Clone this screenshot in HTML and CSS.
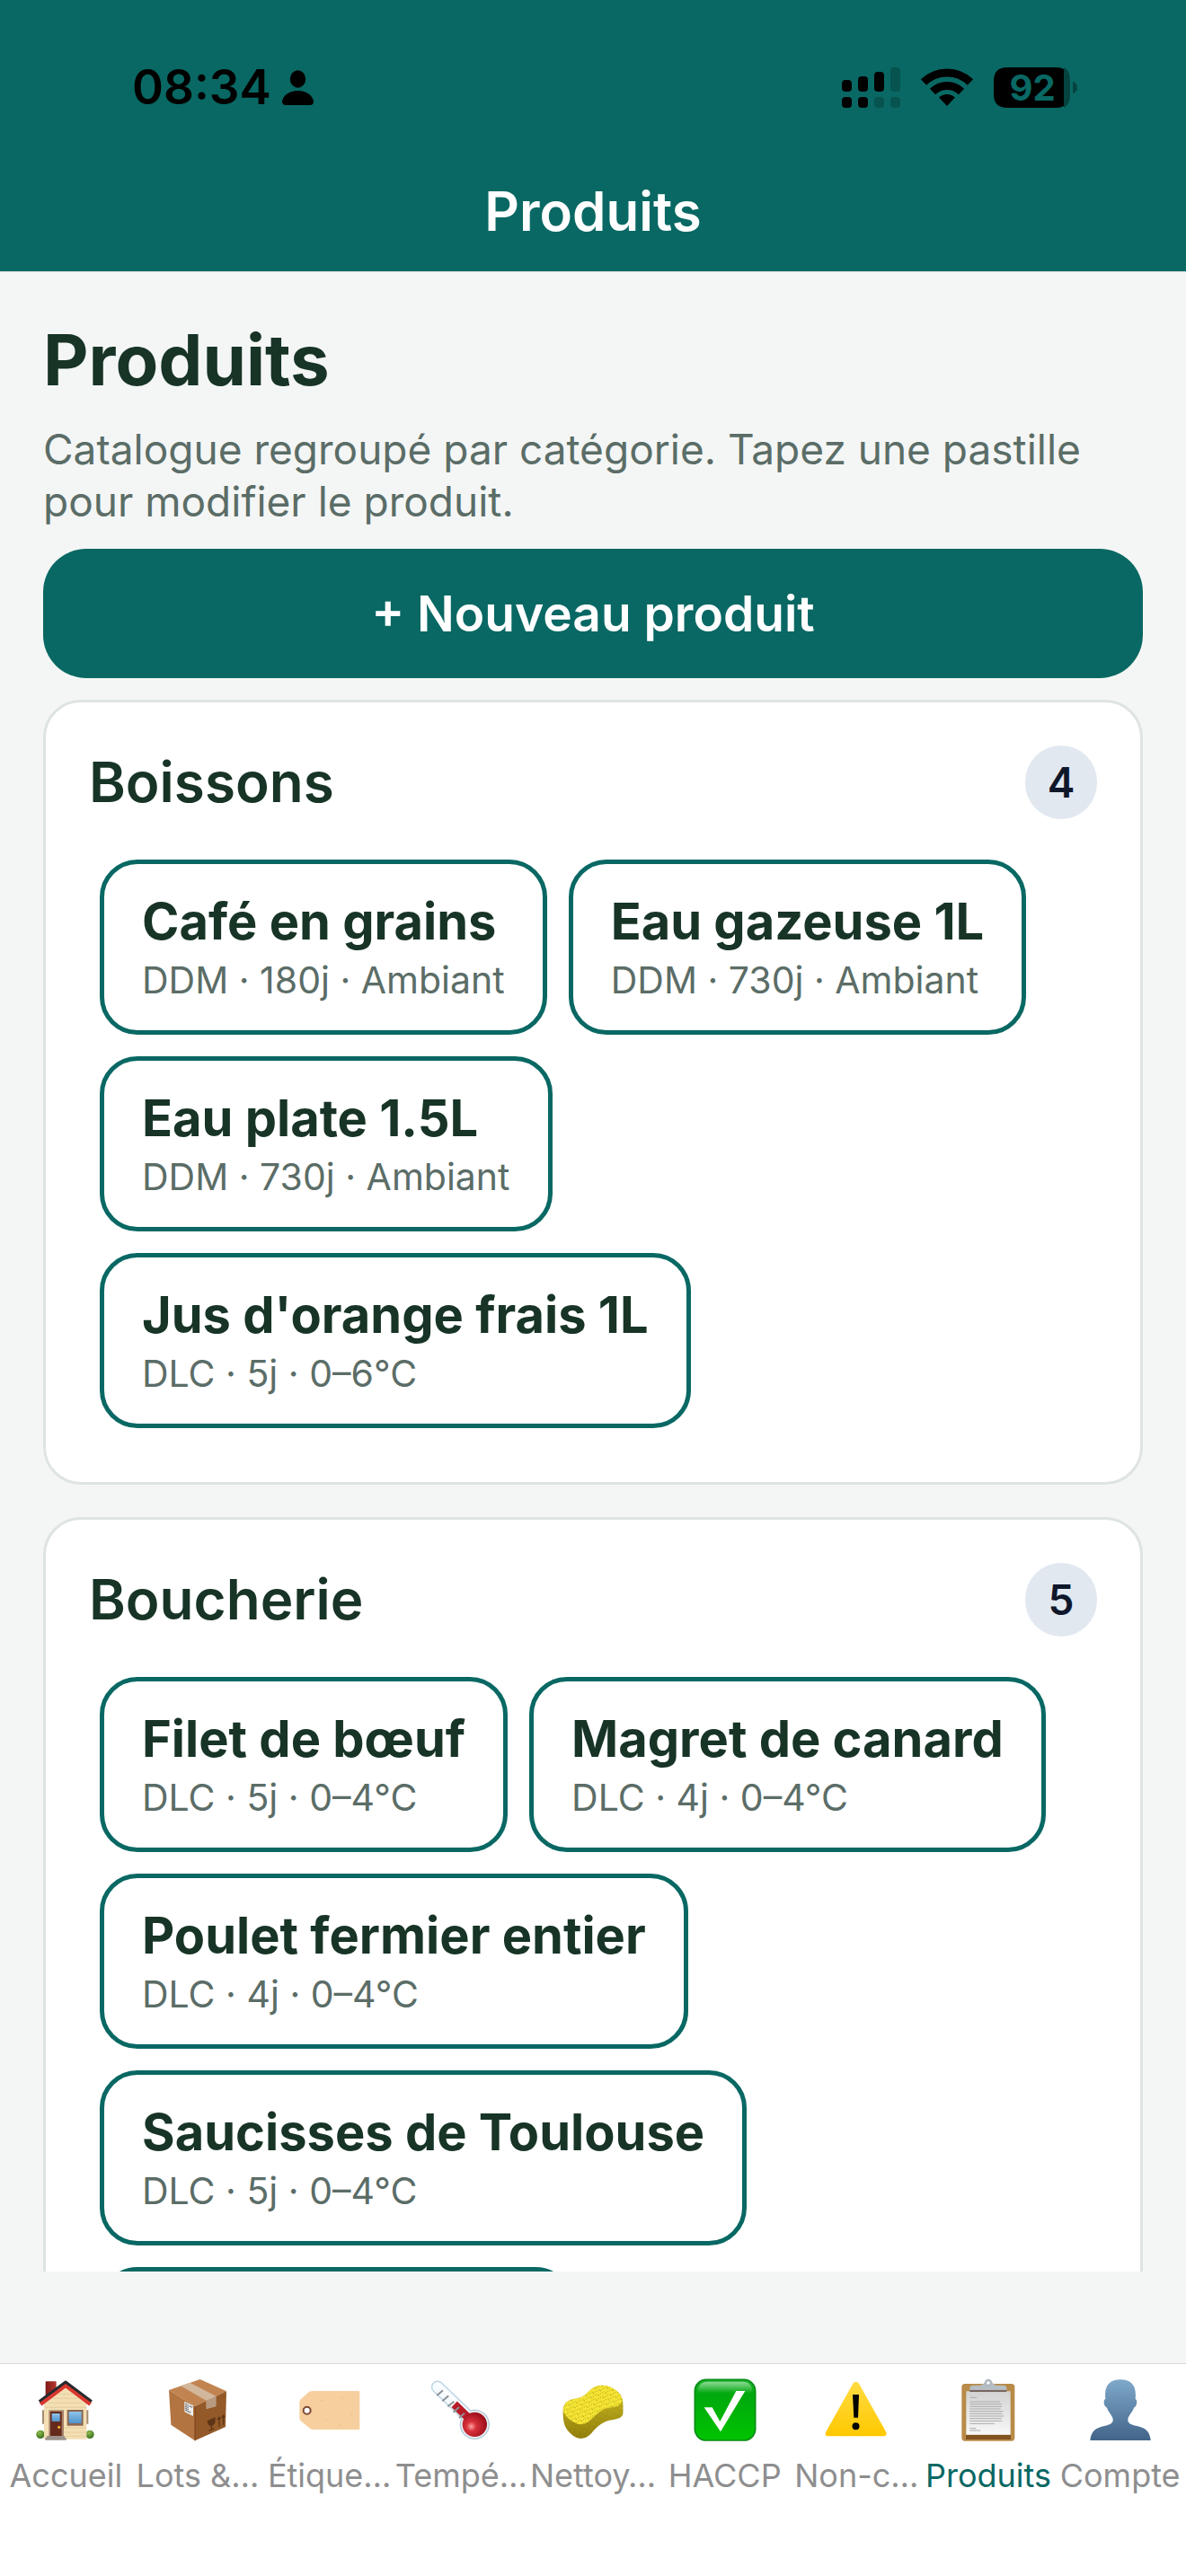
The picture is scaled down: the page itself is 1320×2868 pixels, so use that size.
FILE: index.html
```html
<!DOCTYPE html>
<html lang="fr">
<head>
    <meta charset="UTF-8">
    <meta name="viewport" content="width=device-width, initial-scale=1.0">
    <title>Produits</title>
    <link rel="stylesheet" href="styles.css">
</head>
<body>
    <!-- Header -->
    <header class="app-header">
        <div class="status-bar">
            <div class="status-left">
                <span class="time">08:34</span>
                <svg class="person" viewBox="0 0 35 39" aria-hidden="true">
                    <ellipse cx="17.5" cy="10" rx="8.7" ry="9.7"/>
                    <path d="M4 39C1 39 0 37 0 35C1 28 8 23 17.500 23S34 28 35 35C35 37 34 39 31 39Z"/>
                </svg>
            </div>
            <div class="status-right">
                <svg class="signal" viewBox="0 0 65 45" aria-hidden="true">
                    <rect x="0" y="14" width="11" height="13" rx="4"/>
                    <rect x="18" y="10" width="11" height="17" rx="4"/>
                    <rect x="36" y="5" width="11" height="22" rx="4"/>
                    <rect x="54" y="0" width="11" height="27" rx="4" opacity=".2"/>
                    <rect x="0" y="33" width="11" height="12" rx="4"/>
                    <rect x="18" y="33" width="11" height="12" rx="4"/>
                    <rect x="36" y="33" width="11" height="12" rx="4" opacity=".2"/>
                    <rect x="54" y="33" width="11" height="12" rx="4" opacity=".2"/>
                </svg>
                <svg class="wifi" viewBox="0 0 60 44" aria-hidden="true">
                    <path d="M4 16.500A37.500 37.500 0 0 1 56 16.500M14 27A23 23 0 0 1 46 27" fill="none" stroke="#000" stroke-width="9"/>
                    <path d="M30 43L21 33.500A13 13 0 0 1 39 33.500Z"/>
                </svg>
                <svg class="battery" viewBox="0 0 94 45" aria-hidden="true">
                    <path d="M78 0C83 2 85 8 85 15V30C85 37 83 43 78 45ZM88 16C92 17 93 20 93 22.500S92 28 88 29Z" opacity=".35"/>
                    <path d="M15 0H70Q75 0 78 2V43Q75 45 70 45H15Q0 45 0 30V15Q0 0 15 0Z"/>
                    <text x="43" y="37" text-anchor="middle">92</text>
                </svg>
            </div>
        </div>
        <div class="nav-title">Produits</div>
    </header>

    <!-- Main Content -->
    <main>
        <h1>Produits</h1>
        <p class="intro">Catalogue regroupé par catégorie. Tapez une pastille pour modifier le produit.</p>
        <button type="button" class="new-button">+ Nouveau produit</button>

        <section class="card">
            <div class="card-header">
                <h2>Boissons</h2>
                <span class="count">4</span>
            </div>
            <div class="chips">
                <button type="button" class="chip"><strong>Café en grains</strong><small>DDM · 180j · Ambiant</small></button>
                <button type="button" class="chip"><strong>Eau gazeuse 1L</strong><small>DDM · 730j · Ambiant</small></button>
                <button type="button" class="chip"><strong>Eau plate 1.5L</strong><small>DDM · 730j · Ambiant</small></button>
                <button type="button" class="chip"><strong>Jus d'orange frais 1L</strong><small>DLC · 5j · 0–6°C</small></button>
            </div>
        </section>

        <section class="card">
            <div class="card-header">
                <h2>Boucherie</h2>
                <span class="count">5</span>
            </div>
            <div class="chips">
                <button type="button" class="chip"><strong>Filet de bœuf</strong><small>DLC · 5j · 0–4°C</small></button>
                <button type="button" class="chip"><strong>Magret de canard</strong><small>DLC · 4j · 0–4°C</small></button>
                <button type="button" class="chip"><strong>Poulet fermier entier</strong><small>DLC · 4j · 0–4°C</small></button>
                <button type="button" class="chip"><strong>Saucisses de Toulouse</strong><small>DLC · 5j · 0–4°C</small></button>
                <button type="button" class="chip chip-empty" aria-label="Produit"></button>
            </div>
        </section>
    </main>

    <!-- Tab bar -->
    <nav class="tab-bar">
        <a href="#accueil" class="tab">
            <svg viewBox="0 0 210 210" aria-hidden="true">
                <defs>
                    <linearGradient id="glass" x1="0" y1="0" x2="0" y2="1"><stop offset="0" stop-color="#8ec4ea"/><stop offset="1" stop-color="#4f93cc"/></linearGradient>
                    <linearGradient id="brick"><stop offset="0" stop-color="#7d1a17"/><stop offset="1" stop-color="#b5342c"/></linearGradient>
                    <radialGradient id="bush" cx=".4" cy=".3" r=".8"><stop offset="0" stop-color="#8fbe50"/><stop offset="1" stop-color="#2f6417"/></radialGradient>
                </defs>
                <path d="M27 106h8v46h-8zM174 106h7v46h-7z" fill="#a58b71"/>
                <circle cx="21" cy="187" r="14" fill="url(#bush)"/>
                <circle cx="186" cy="187" r="14" fill="url(#bush)"/>
                <rect x="38" y="10" width="36" height="60" rx="2" fill="url(#brick)"/>
                <path d="M33 84L105 24L175 84V203H33Z" fill="#f3dfb3"/>
                <path d="M82 52H128M65 67H145M48 82H162M35 97H174M98 165H174M98 180H174M98 193H174" stroke="#dcc497" stroke-width="2"/>
                <path d="M21 86L105 23L188 86" fill="none" stroke="#d8372f" stroke-width="14"/>
                <path d="M17 77L105 12L192 77" fill="none" stroke="#252a2e" stroke-width="9" stroke-linejoin="round"/>
                <rect x="49" y="106" width="50" height="88" fill="#a8826a"/>
                <rect x="54" y="111" width="38" height="82" fill="#652a1b"/>
                <rect x="59" y="117" width="27" height="27" fill="url(#glass)"/>
                <circle cx="83" cy="163" r="5" fill="#f2ad2e"/>
                <path d="M42 192H102V198H107V206H37V198H42Z" fill="#9b928a"/>
                <rect x="110" y="105" width="54" height="53" fill="#8b6750"/>
                <rect x="116" y="111" width="42" height="39" fill="url(#glass)"/>
            </svg>
            <span>Accueil</span>
        </a>
        <a href="#lots" class="tab">
            <svg viewBox="0 0 210 210" aria-hidden="true">
                <path d="M9 39L113 3L201 43L96 93Z" fill="#c18450"/>
                <path d="M9 39L96 93V208L16 155Z" fill="#b27440"/>
                <path d="M96 93L201 43L198 162L96 208Z" fill="#935928"/>
                <path d="M96 93V208" stroke="#774116" stroke-width="3"/>
                <path d="M48 25L79 14L166 59V93L134 102V74Z" fill="#d2b79c"/>
                <path d="M134 74L166 59V93L134 102Z" fill="#b79a80"/>
                <path d="M61 77L90 91V126L61 112Z" fill="#eee"/>
                <path d="M64 85L74 90M64 92L74 97M64 99L74 104M78 92L87 97M64 106L83 115" stroke="#777" stroke-width="5" stroke-dasharray="5 2"/>
                <path d="M139 143L162 133C163 149 157 156 151 157C144 157 140 150 139 143ZM151 155V171M142 175L160 167M177 161V132M191 155V126M171 138L177 130L181 135M185 132L191 123L196 129" fill="#5d3516" stroke="#5d3516" stroke-width="4"/>
            </svg>
            <span>Lots &amp;…</span>
        </a>
        <a href="#etiquettes" class="tab">
            <svg viewBox="0 0 210 210" aria-hidden="true">
                <path d="M46 42H201Q205 42 205 46V167Q205 171 201 171H51Q43 171 36 165L8 142Q4 139 4 133V79Q4 74 8 70L33 47Q39 42 46 42Z" fill="#f7cf9f"/>
                <path d="M75 72l6 3M112 97l4 4M144 66l5-2M138 155l6 3M90 140l4-3M175 120l5 2" stroke="#e5b982" stroke-width="3"/>
                <circle cx="29" cy="107" r="12" fill="#fff" stroke="#7b4a32" stroke-width="6"/>
            </svg>
            <span>Étique…</span>
        </a>
        <a href="#temperatures" class="tab">
            <svg viewBox="0 0 210 210" aria-hidden="true">
                <defs>
                    <radialGradient id="bulb" cx=".36" cy=".58" r=".65"><stop offset="0" stop-color="#ffa4a4"/><stop offset=".3" stop-color="#d8323b"/><stop offset="1" stop-color="#960a16"/></radialGradient>
                </defs>
                <path d="M27 29L145 142" stroke="#bdd5e2" stroke-width="43" stroke-linecap="round"/>
                <circle cx="151" cy="154" r="50" fill="#b4c8d4"/>
                <path d="M27 29L145 142" stroke="#f5fbff" stroke-width="34" stroke-linecap="round"/>
                <circle cx="151" cy="154" r="46" fill="#e6eef2"/>
                <path d="M83 86L137 139" stroke="#b91b27" stroke-width="27"/>
                <circle cx="151" cy="154" r="41" fill="url(#bulb)"/>
                <path d="M25 57L45 40M43 76L64 58M61 94L82 77M80 113L99 96M99 132L117 116" stroke="#8c9094" stroke-width="6"/>
                <path d="M26 18L87 76" stroke="#fff" stroke-width="5" stroke-linecap="round"/>
            </svg>
            <span>Tempé…</span>
        </a>
        <a href="#nettoyage" class="tab">
            <svg viewBox="0 0 210 210" aria-hidden="true">
                <defs>
                    <linearGradient id="foam" x1="0" y1="0" x2="0" y2="1"><stop offset="0" stop-color="#d2c326"/><stop offset="1" stop-color="#8f7c0b"/></linearGradient>
                    <pattern id="pores" width="19" height="17" patternUnits="userSpaceOnUse" patternTransform="rotate(23)">
                        <circle cx="3" cy="4" r="2" fill="#a18c0d"/><circle cx="12" cy="8" r="1.500" fill="#907c0d"/><circle cx="7" cy="14" r="1.800" fill="#b19c12"/><circle cx="17" cy="2" r="1.500" fill="#a18c0d"/>
                    </pattern>
                </defs>
                <path d="M5 103Q8 73 45 68C77 64 80 51 100 35C126 14 164 23 190 47C205 61 207 77 205 119C201 133 184 136 166 139C128 145 111 172 93 190C73 206 50 204 30 184C9 165 4 143 5 103Z" fill="url(#foam)"/>
                <path d="M6 103Q9 73 45 68C77 64 80 51 100 35C128 14 164 22 190 47C211 70 205 92 171 96C132 100 119 119 97 139C79 157 57 157 36 143C15 130 5 117 6 103Z" fill="#f5e534"/>
                <path d="M5 103Q8 73 45 68C77 64 80 51 100 35C126 14 164 23 190 47C205 61 207 77 205 119C201 133 184 136 166 139C128 145 111 172 93 190C73 206 50 204 30 184C9 165 4 143 5 103Z" fill="url(#pores)"/>
            </svg>
            <span>Nettoy…</span>
        </a>
        <a href="#haccp" class="tab">
            <svg viewBox="0 0 210 210" aria-hidden="true">
                <defs>
                    <linearGradient id="tick-bg" x1="0" y1="0" x2="0" y2="1"><stop offset="0" stop-color="#20b52e"/><stop offset=".25" stop-color="#00a80d"/><stop offset="1" stop-color="#00c400"/></linearGradient>
                    <linearGradient id="shine" x1="0" y1="0" x2="0" y2="1"><stop offset="0" stop-color="#fff" stop-opacity=".5"/><stop offset="1" stop-color="#fff" stop-opacity="0"/></linearGradient>
                </defs>
                <rect x="4" y="4" width="202" height="203" rx="38" fill="url(#tick-bg)" stroke="#078c15" stroke-width="5"/>
                <path d="M14 48Q14 11 47 11H163Q196 11 196 48Z" fill="url(#shine)"/>
                <path d="M35 97H62L88 144L142 42H172L90 178Z" fill="#fff"/>
            </svg>
            <span>HACCP</span>
        </a>
        <a href="#non-conformites" class="tab">
            <svg viewBox="0 0 210 210" aria-hidden="true">
                <defs>
                    <linearGradient id="warn" x1="0" y1="0" x2="0" y2="1"><stop offset="0" stop-color="#ffdb43"/><stop offset="1" stop-color="#ffc800"/></linearGradient>
                </defs>
                <path d="M94 17Q104 5 114 17L205 180Q208 193 196 193H12Q-1 193 3 180Z" fill="url(#warn)"/>
                <path d="M93 54H114L111 131H97Z"/>
                <circle cx="103.500" cy="160" r="12"/>
            </svg>
            <span>Non-c…</span>
        </a>
        <a href="#produits" class="tab active" aria-current="page">
            <svg viewBox="0 0 210 210" aria-hidden="true">
                <defs>
                    <linearGradient id="paper" x1="0" y1="0" x2="0" y2="1"><stop offset="0" stop-color="#d2d2d2"/><stop offset="1" stop-color="#f8f8f8"/></linearGradient>
                </defs>
                <rect x="16" y="18" width="177" height="191" rx="11" fill="#b98b48"/>
                <path d="M30 188H180V204H30Z" fill="#805321"/>
                <path d="M31 43H179V188H31Z" fill="url(#paper)"/>
                <path d="M43 38H166V45H43Z" fill="#78665f"/>
                <path d="M43 39V32Q43 23 57 23H77Q91 20 92 13H118Q121 22 134 23H153Q166 23 166 32V39Z" fill="#b6bdc2"/>
                <circle cx="105" cy="15" r="9" fill="#fff" stroke="#aeb8c0" stroke-width="7"/>
                <path d="M43 64H66M43 78H144M43 86H150M43 94H150M43 102H146M43 110H154M43 118H151M43 126H156M43 134H149M43 142H151M43 151H125M43 167H64M43 174H79" stroke="#ababab" stroke-width="3"/>
            </svg>
            <span>Produits</span>
        </a>
        <a href="#compte" class="tab">
            <svg viewBox="0 0 210 210" aria-hidden="true">
                <defs>
                    <linearGradient id="bust" x1="0" y1="0" x2="0" y2="1"><stop offset="0" stop-color="#7fa9ca"/><stop offset="1" stop-color="#426489"/></linearGradient>
                </defs>
                <path d="M4 207C7 177 20 165 54 158C73 154 81 148 80 136C78 123 66 115 60 98Q47 91 51 72L55 68C50 25 69 4 105 4S160 25 155 68L159 73Q162 91 150 98C144 115 132 123 130 136C129 148 137 154 156 158C190 165 203 177 206 207Z" fill="url(#bust)"/>
            </svg>
            <span>Compte</span>
        </a>
    </nav>
</body>
</html>
```

FILE: styles.css
```css
/* General Styles */
* {
    box-sizing: border-box;
}

body {
    display: flex;
    flex-direction: column;
    height: 100vh;
    margin: 0;
    background-color: #f4f6f5;
    color: #173426;
    font-family: Inter, "Liberation Sans", sans-serif;
}

button {
    font-family: inherit;
    cursor: pointer;
}

/* Header */
.app-header {
    flex: none;
    background-color: #096863;
    border-bottom: 1px solid #d5dcda;
}

.status-bar {
    display: flex;
    align-items: center;
    justify-content: space-between;
    padding: 64px 120px 0 147px;
    color: #000;
}

.status-left,
.status-right {
    display: flex;
    align-items: center;
    height: 66px;
}

.status-left {
    gap: 12px;
}

.status-right {
    gap: 22px;
}

.time {
    font-size: 53px;
    font-weight: 600;
    line-height: 66px;
}

.person {
    width: 35px;
    height: 39px;
}

.signal {
    width: 65px;
    height: 45px;
}

.wifi {
    width: 60px;
    height: 44px;
}

.battery {
    width: 94px;
    height: 45px;
    overflow: visible;
}

.battery text {
    fill: #096863;
    font-size: 40px;
    font-weight: 700;
}

.nav-title {
    padding: 66px 0 28px;
    color: #fff;
    font-size: 60px;
    font-weight: 600;
    line-height: 78px;
    text-align: center;
}

/* Main Content */
main {
    flex: 1;
    min-height: 0;
    margin-bottom: 102px;
    padding: 48px 48px 0;
    overflow: hidden;
}

h1 {
    margin: 0 0 20px;
    font-size: 78px;
    font-weight: 700;
    line-height: 100px;
}

.intro {
    margin: 0 0 24px;
    color: #5b6d67;
    font-size: 46px;
    line-height: 58px;
}

.new-button {
    display: block;
    width: 100%;
    height: 144px;
    margin-bottom: 24px;
    border: none;
    border-radius: 48px;
    background-color: #096863;
    color: #fff;
    font-size: 55px;
    font-weight: 600;
}

.card {
    margin-bottom: 36px;
    padding: 48px;
    border: 3px solid #dde4e2;
    border-radius: 42px;
    background-color: #fff;
}

.card-header {
    display: flex;
    align-items: center;
    justify-content: space-between;
    margin-bottom: 33px;
}

h2 {
    margin: 0;
    font-size: 62px;
    font-weight: 600;
    line-height: 82px;
}

.count {
    min-width: 80px;
    border-radius: 41px;
    background-color: #e1e8f0;
    color: #0f172a;
    font-size: 46px;
    font-weight: 600;
    line-height: 82px;
    text-align: center;
}

.chips {
    display: flex;
    flex-wrap: wrap;
    gap: 24px;
    padding: 12px;
}

.chip {
    display: flex;
    flex-direction: column;
    align-items: flex-start;
    min-height: 195px;
    padding: 30px 42px;
    border: 5px solid #096863;
    border-radius: 42px;
    background-color: #fff;
}

.chip-empty {
    width: 48%;
}

.chip strong {
    color: #173426;
    font-size: 56px;
    font-weight: 700;
    line-height: 68px;
}

.chip small {
    margin-top: 6px;
    color: #5b6d67;
    font-size: 41px;
    line-height: 51px;
}

/* Tab bar */
.tab-bar {
    display: grid;
    grid-template-columns: repeat(9, 1fr);
    flex: none;
    height: 237px;
    border-top: 1px solid #d5d7d6;
    background-color: #fff;
}

.tab {
    display: flex;
    flex-direction: column;
    align-items: center;
    gap: 16px;
    min-width: 0;
    padding-top: 16px;
    color: #8e8e8f;
    font-size: 36px;
    line-height: 44px;
    text-decoration: none;
    white-space: nowrap;
}

.tab.active {
    color: #096863;
}

.tab svg {
    width: 70px;
    height: 70px;
}
```
